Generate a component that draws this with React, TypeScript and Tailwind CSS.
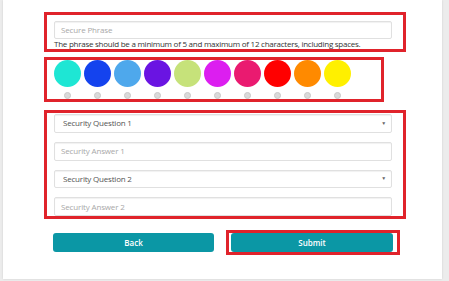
import React from "react";

const colors = [
  "#1ee6d4",
  "#1443ee",
  "#4ea8ec",
  "#6a14e2",
  "#c6e27a",
  "#dc1ef0",
  "#ea1a70",
  "#ff0000",
  "#ff8a00",
  "#fff000",
];

function Select({ label }: { label: string }) {
  return (
    <div className="h-[19px] w-[338px] flex items-center justify-between border border-[#e0e0e0] rounded-[2px] bg-white shadow-[inset_0_1px_1px_rgba(0,0,0,0.06)] pl-[8px] pr-[5px] text-[8px] tracking-[-0.2px] text-[#555]">
      <span>{label}</span>
      <span className="text-[5px] text-[#666]">▼</span>
    </div>
  );
}

function Input({ placeholder }: { placeholder: string }) {
  return (
    <div className="h-[19px] w-[338px] flex items-center border border-[#e0e0e0] rounded-[2px] bg-white shadow-[inset_0_1px_1px_rgba(0,0,0,0.06)] pl-[6px] text-[8px] tracking-[-0.15px] text-[#a8a8a8]">
      {placeholder}
    </div>
  );
}

export default function App() {
  return (
    <div
      className="w-[449px] h-[281px] bg-[#ececec] overflow-hidden"
      style={{ fontFamily: '"Open Sans", "Liberation Sans", sans-serif' }}
    >
      <div className="ml-[3px] w-[439px] h-[279px] bg-white shadow-[0_0_2px_rgba(0,0,0,0.12)] flex flex-col pl-[41px] pt-[12px]">
        {/* Box 1 */}
        <div className="w-[362px] h-[40px] border-[3px] border-[#e0232b] pl-[7px] pt-[6px]">
          <div className="h-[18px] w-[338px] flex items-center border border-[#e0e0e0] rounded-[2px] bg-white shadow-[inset_0_1px_1px_rgba(0,0,0,0.06)] pl-[6px] text-[8px] tracking-[-0.15px] text-[#a8a8a8]">
            Secure Phrase
          </div>
          <div className="text-[8px] tracking-[-0.25px] leading-[10px] text-[#333] whitespace-nowrap">
            The phrase should be a minimum of 5 and maximum of 12 characters, including spaces.
          </div>
        </div>
        {/* Box 2 */}
        <div className="mt-[5px] w-[340px] h-[45px] border-[3px] border-[#e0232b] pl-[7px] flex gap-[3px]">
          {colors.map((c) => (
            <div key={c} className="flex flex-col items-center w-[27px]">
              <div className="w-[27px] h-[27px] rounded-full" style={{ backgroundColor: c }} />
              <div className="mt-[5.5px] w-[7px] h-[7px] rounded-full bg-[#dadada] border border-[#c8c8c8]" />
            </div>
          ))}
        </div>
        {/* Box 3 */}
        <div className="mt-[8px] w-[362px] h-[109px] border-[3px] border-[#e0232b] pl-[7px] pt-[1px] flex flex-col gap-[9px]">
          <Select label="Security Question 1" />
          <Input placeholder="Security Answer 1" />
          <Select label="Security Question 2" />
          <Input placeholder="Security Answer 2" />
        </div>
        {/* Buttons */}
        <div className="mt-[11px] flex items-center">
          <div className="ml-[9px] w-[161px] h-[19px] rounded-[3px] bg-[#0b97a5] text-white text-[8px] font-semibold flex items-center justify-center">
            Back
          </div>
          <div className="ml-[12px] w-[174px] h-[25px] border-[3px] border-[#e0232b] pl-[2px] flex items-center">
            <div className="w-[162px] h-[19px] rounded-[3px] bg-[#0b97a5] text-white text-[8px] font-semibold flex items-center justify-center">
              Submit
            </div>
          </div>
        </div>
      </div>
    </div>
  );
}
